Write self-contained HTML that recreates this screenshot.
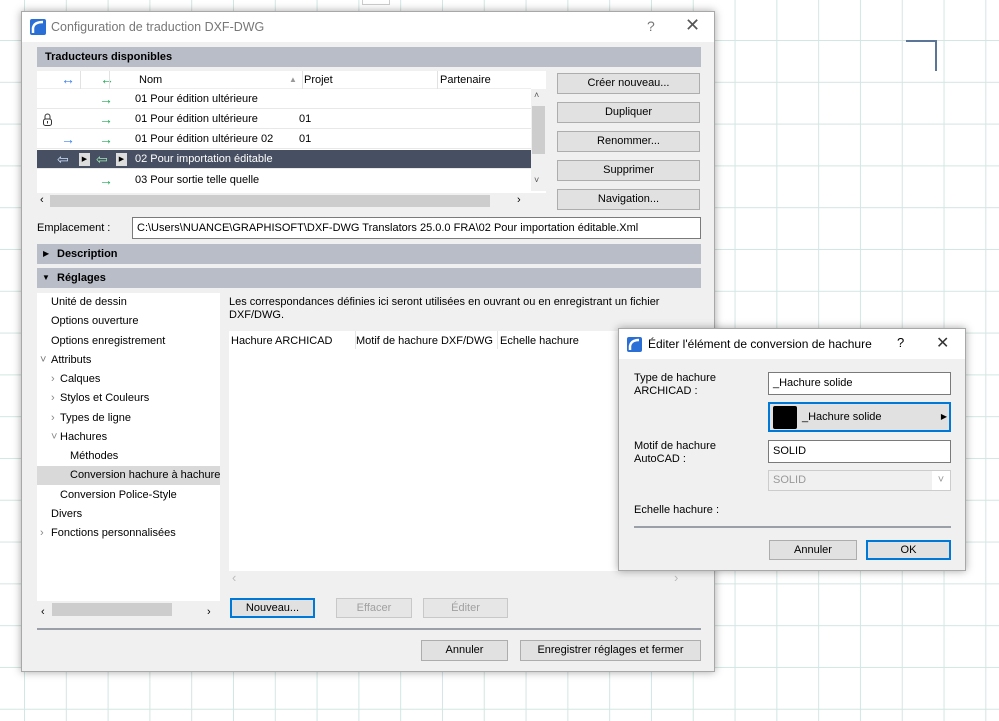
<!DOCTYPE html>
<html><head><meta charset="utf-8"><style>
*{box-sizing:border-box;margin:0;padding:0}
body{width:999px;height:721px;overflow:hidden;position:relative;font-family:"Liberation Sans",sans-serif;font-size:11px;color:#000;
background-color:#fff;
background-image:linear-gradient(to right,#d3e6e3 1px,transparent 1px),linear-gradient(to bottom,#d3e6e3 1px,transparent 1px);
background-size:41.8px 41.8px;background-position:24px 40px}
.a{position:absolute}
.dlg{background:#f0f0f0;border:1px solid #a8a8a8;box-shadow:0 0 8px rgba(0,0,0,.35)}
.tb{background:#fff;left:0;right:0;top:0;height:30px}
.bar{background:#b9bdc8;height:20px;font-weight:bold;padding-left:8px;line-height:20px}
.btn{background:#e1e1e1;border:1px solid #adadad;text-align:center;line-height:18px}
.blue{border:2px solid #0078d7;line-height:16px}
.dis{color:#a0a0a0;background:#e6e6e6;border-color:#c8c8c8}
.wh{background:#fff}
.row{left:0;width:494px;height:20px;line-height:20px;border-bottom:1px solid #e8e8e8}
.g{color:#1faa55;font-size:14px}.b{color:#3b82f0;font-size:14px}
.fld{background:#fff;border:1px solid #7a7a7a;padding-left:4px;line-height:20px}
</style></head><body>
<div class="a" style="left:362px;top:0;width:28px;height:5px;border:1px solid #ccc;border-top:0;background:#fff"></div>
<div class="a" style="left:906px;top:40px;width:31px;height:31px;border-top:2px solid #5a7598;border-right:2px solid #5a7598"></div>

<div class="a dlg" style="left:21px;top:11px;width:694px;height:661px">
 <div class="a tb"></div>
 <svg class="a" style="left:8px;top:7px" width="16" height="16"><rect width="16" height="16" rx="2" fill="#2a6fd6"/><path d="M3 14 V9 Q4 3 13 3" stroke="#fff" stroke-width="2.5" fill="none"/></svg>
 <div class="a" style="left:29px;top:8px;font-size:12.5px;color:#777">Configuration de traduction DXF-DWG</div>
 <div class="a" style="left:625px;top:6px;font-size:14px;color:#777">?</div>
 <div class="a" style="left:663px;top:3px;font-size:18px;color:#555">✕</div>
 <div class="a bar" style="left:15px;top:35px;width:664px">Traducteurs disponibles</div>
 <div class="a wh" style="left:15px;top:59px;width:509px;height:138px">
  <div class="a" style="left:0;top:0;width:494px;height:18px;border-bottom:1px solid #eee"></div>
  <div class="a b" style="left:24px;top:0">↔</div><div class="a g" style="left:63px;top:0">↔</div>
  <div class="a" style="left:43px;top:0;width:1px;height:18px;background:#e2e2e2"></div>
  <div class="a" style="left:72px;top:0;width:1px;height:18px;background:#e2e2e2"></div>
  <div class="a" style="left:102px;top:3px">Nom</div><div class="a" style="left:252px;top:4px;color:#999;font-size:8px">▲</div>
  <div class="a" style="left:265px;top:0;width:1px;height:18px;background:#e2e2e2"></div>
  <div class="a" style="left:267px;top:3px">Projet</div>
  <div class="a" style="left:400px;top:0;width:1px;height:18px;background:#e2e2e2"></div>
  <div class="a" style="left:403px;top:3px">Partenaire</div>
  <div class="a row" style="top:18px"><span class="a g" style="left:62px">→</span><span class="a" style="left:98px">01 Pour édition ultérieure</span></div>
  <div class="a row" style="top:38px"><svg class="a" style="left:6px;top:4px" width="9" height="13"><path d="M2 6 V3.5 a2.5 2.5 0 0 1 5 0 V6" stroke="#333" fill="none"/><rect x="0.5" y="6" width="8" height="6.5" rx="2" stroke="#333" fill="none"/><line x1="4.5" y1="8" x2="4.5" y2="10.5" stroke="#333"/></svg><span class="a g" style="left:62px">→</span><span class="a" style="left:98px">01 Pour édition ultérieure</span><span class="a" style="left:262px">01</span></div>
  <div class="a row" style="top:58px"><span class="a b" style="left:24px">→</span><span class="a g" style="left:62px">→</span><span class="a" style="left:98px">01 Pour édition ultérieure 02</span><span class="a" style="left:262px">01</span></div>
  <div class="a row" style="top:79px;background:#474f62;color:#fff;height:19px;line-height:19px"><span class="a" style="left:20px;color:#cfe0ff;font-size:14px">⇦</span><span class="a" style="left:42px;top:3px;width:11px;height:13px;background:#ddd;color:#000;font-size:7px;line-height:13px;text-align:center">▶</span><span class="a" style="left:59px;color:#9fe8b8;font-size:14px">⇦</span><span class="a" style="left:79px;top:3px;width:11px;height:13px;background:#ddd;color:#000;font-size:7px;line-height:13px;text-align:center">▶</span><span class="a" style="left:98px">02 Pour importation éditable</span></div>
  <div class="a row" style="top:99px;border:0"><span class="a g" style="left:62px">→</span><span class="a" style="left:98px">03 Pour sortie telle quelle</span></div>
  <div class="a" style="left:494px;top:18px;width:15px;height:102px;background:#f0f0f0"><div class="a" style="left:1px;top:17px;width:13px;height:48px;background:#cdcdcd"></div><div class="a" style="left:3px;top:1px;font-size:9px;color:#555">˄</div><div class="a" style="left:3px;top:86px;font-size:9px;color:#555">˅</div></div>
  <div class="a" style="left:0;top:122px;width:509px;height:16px;background:#f0f0f0"><div class="a" style="left:13px;top:2px;width:440px;height:12px;background:#cdcdcd"></div><div class="a" style="left:3px;top:1px">‹</div><div class="a" style="left:480px;top:1px">›</div></div>
 </div>
 <div class="a btn" style="left:535px;top:61px;width:143px;height:21px">Créer nouveau...</div>
 <div class="a btn" style="left:535px;top:90px;width:143px;height:21px">Dupliquer</div>
 <div class="a btn" style="left:535px;top:119px;width:143px;height:21px">Renommer...</div>
 <div class="a btn" style="left:535px;top:148px;width:143px;height:21px">Supprimer</div>
 <div class="a btn" style="left:535px;top:177px;width:143px;height:21px">Navigation...</div>
 <div class="a" style="left:15px;top:210px">Emplacement :</div>
 <div class="a fld" style="left:110px;top:205px;width:569px;height:22px">C:\Users\NUANCE\GRAPHISOFT\DXF-DWG Translators 25.0.0 FRA\02 Pour importation éditable.Xml</div>
 <div class="a bar" style="left:15px;top:232px;width:664px;padding-left:20px">Description</div>
 <div class="a" style="left:21px;top:237px;font-size:8px">▶</div>
 <div class="a bar" style="left:15px;top:256px;width:664px;padding-left:20px">Réglages</div>
 <div class="a" style="left:20px;top:261px;font-size:8px">▼</div>
 <div class="a wh" style="left:15px;top:281px;width:183px;height:326px;line-height:19.3px">
  <div class="a" style="left:0;top:173px;width:183px;height:19px;background:#d9d9d9"></div>
  <div class="a" style="left:14px;top:0">Unité de dessin<br>Options ouverture<br>Options enregistrement<br>Attributs</div>
  <div class="a" style="left:3px;top:58px;color:#777">˅</div>
  <div class="a" style="left:14px;top:77px;color:#888;line-height:19.3px">›<br>›<br>›<br>˅</div>
  <div class="a" style="left:23px;top:77px">Calques<br>Stylos et Couleurs<br>Types de ligne<br>Hachures</div>
  <div class="a" style="left:33px;top:154px;white-space:nowrap">Méthodes<br>Conversion hachure à hachure</div>
  <div class="a" style="left:23px;top:193px">Conversion Police-Style</div>
  <div class="a" style="left:14px;top:212px">Divers<br>Fonctions personnalisées</div>
  <div class="a" style="left:3px;top:231px;color:#888">›</div>
  <div class="a" style="left:0;top:308px;width:183px;height:18px;background:#f0f0f0"><div class="a" style="left:15px;top:2px;width:120px;height:13px;background:#cdcdcd"></div><div class="a" style="left:4px;top:2px">‹</div><div class="a" style="left:170px;top:2px">›</div></div>
 </div>
 <div class="a" style="left:207px;top:284px;line-height:13px">Les correspondances définies ici seront utilisées en ouvrant ou en enregistrant un fichier<br>DXF/DWG.</div>
 <div class="a wh" style="left:207px;top:319px;width:472px;height:240px">
  <div class="a" style="left:2px;top:4px">Hachure ARCHICAD</div>
  <div class="a" style="left:126px;top:0;width:1px;height:18px;background:#e6e6e6"></div>
  <div class="a" style="left:127px;top:4px">Motif de hachure DXF/DWG</div>
  <div class="a" style="left:268px;top:0;width:1px;height:18px;background:#e6e6e6"></div>
  <div class="a" style="left:271px;top:4px">Echelle hachure</div>
 </div>
 <div class="a" style="left:210px;top:558px;color:#bbb;font-size:13px">‹</div>
 <div class="a" style="left:652px;top:558px;color:#bbb;font-size:13px">›</div>
 <div class="a btn blue" style="left:208px;top:586px;width:85px;height:20px">Nouveau...</div>
 <div class="a btn dis" style="left:314px;top:586px;width:76px;height:20px">Effacer</div>
 <div class="a btn dis" style="left:401px;top:586px;width:85px;height:20px">Éditer</div>
 <div class="a" style="left:15px;top:616px;width:664px;height:2px;background:#9a9fa8"></div>
 <div class="a btn" style="left:399px;top:628px;width:87px;height:21px">Annuler</div>
 <div class="a btn" style="left:498px;top:628px;width:181px;height:21px">Enregistrer réglages et fermer</div>
</div>

<div class="a dlg" style="left:618px;top:328px;width:348px;height:243px">
 <div class="a tb"></div>
 <svg class="a" style="left:8px;top:8px" width="15" height="15"><rect width="15" height="15" rx="2" fill="#2a6fd6"/><path d="M3 13 V9 Q4 3 12 3" stroke="#fff" stroke-width="2.5" fill="none"/></svg>
 <div class="a" style="left:29px;top:8px;font-size:12px">Éditer l'élément de conversion de hachure</div>
 <div class="a" style="left:278px;top:6px;font-size:13px">?</div>
 <div class="a" style="left:317px;top:4px;font-size:16px;color:#333">✕</div>
 <div class="a" style="left:15px;top:43px;line-height:13px">Type de hachure<br>ARCHICAD :</div>
 <div class="a fld" style="left:149px;top:43px;width:183px;height:23px">_Hachure solide</div>
 <div class="a btn blue" style="left:149px;top:73px;width:183px;height:30px;text-align:left;line-height:26px;padding-left:32px">_Hachure solide<div class="a" style="left:3px;top:2px;width:24px;height:23px;background:#000;border-radius:2px"></div><span class="a" style="right:2px;top:0;font-size:8px">▶</span></div>
 <div class="a" style="left:15px;top:111px;line-height:13px">Motif de hachure<br>AutoCAD :</div>
 <div class="a fld" style="left:149px;top:111px;width:183px;height:23px">SOLID</div>
 <div class="a" style="left:149px;top:141px;width:183px;height:21px;border:1px solid #ccc;background:#f0f0f0;color:#999;padding-left:4px;line-height:19px">SOLID<span class="a" style="right:0;top:0;width:18px;height:19px;background:#fff;text-align:center">˅</span></div>
 <div class="a" style="left:15px;top:175px">Echelle hachure :</div>
 <div class="a" style="left:15px;top:197px;width:317px;height:2px;background:#9a9fa8"></div>
 <div class="a btn" style="left:150px;top:211px;width:88px;height:20px">Annuler</div>
 <div class="a btn blue" style="left:247px;top:211px;width:85px;height:20px">OK</div>
</div>
</body></html>
